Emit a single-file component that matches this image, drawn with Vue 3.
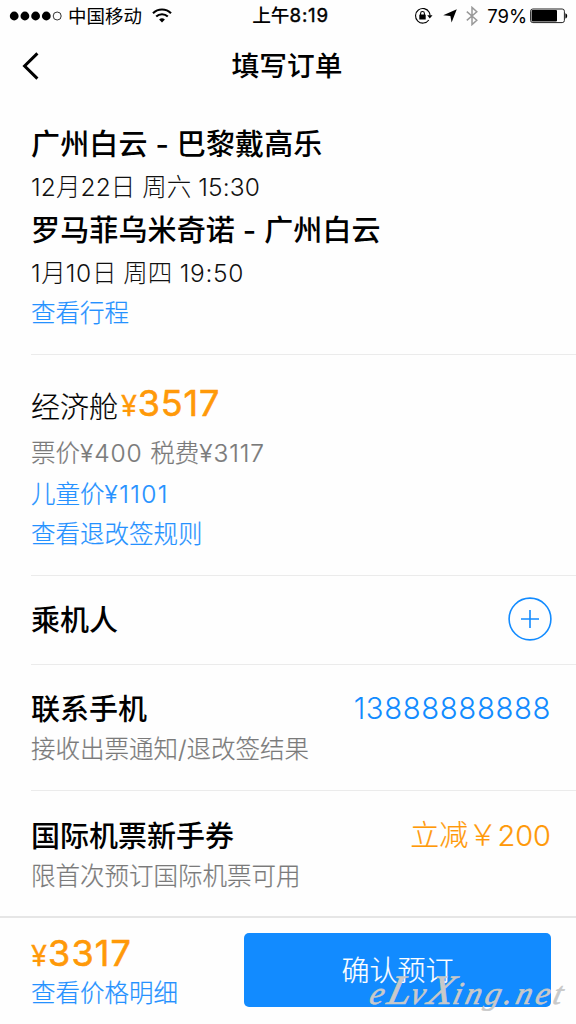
<script setup>
const flights = [
  { route: '广州白云 - 巴黎戴高乐', time: ['12', '月', '22', '日 周六', ' 15:30'], key: 'outbound' },
  { route: '罗马菲乌米奇诺 - 广州白云', time: ['1', '月', '10', '日 周四', ' 19:50'], key: 'inbound' },
]
</script>

<template>
  <div class="screen">
    <header class="status">
      <div class="carrier">
        <svg class="dots" width="54" height="12" viewBox="0 0 54 12">
          <circle cx="5.2" cy="6" r="4.4" /><circle cx="15.9" cy="6" r="4.4" />
          <circle cx="26.6" cy="6" r="4.4" /><circle cx="37.3" cy="6" r="4.4" />
          <circle cx="48.2" cy="6" r="4" fill="none" stroke="#000" stroke-width=".8" />
        </svg>
        <span class="carrier-name">中国移动</span>
        <svg class="wifi" width="20" height="16" viewBox="0 0 20 16" fill="none" stroke="#000">
          <path d="M1 5.2a12.7 12.7 0 0 1 18 0" stroke-width="2.1" />
          <path d="M4.2 8.6a8.2 8.2 0 0 1 11.6 0" stroke-width="2.1" />
          <path d="M10 14.6 7.1 11.6a4.2 4.2 0 0 1 5.8 0z" fill="#000" stroke="none" />
        </svg>
      </div>
      <div class="clock">上午<span>8:19</span></div>
      <div class="indicators">
        <svg class="lock" width="19" height="18" viewBox="0 0 19 18" fill="none" stroke="#000">
          <path d="M15.2 5.2A7.3 7.3 0 1 0 14.8 13M15.2 5.2a7.3 7.3 0 0 1 .8 3.3" stroke-width="1.1" />
          <path d="M13.2 8.2h5.3l-2.7 3.2z" fill="#000" stroke="none" />
          <rect x="5.3" y="7.6" width="6.4" height="5" rx=".4" fill="#000" stroke="none" />
          <path d="M6.6 8V6.4a1.9 1.9 0 0 1 3.8 0V8" stroke-width="1.1" />
        </svg>
        <svg class="arrow" width="14" height="14" viewBox="0 0 14 14"><path d="M13.8.3 8.6 13.6 7.4 7 .2 6.2z" /></svg>
        <svg class="bt" width="12" height="20" viewBox="0 0 12 20" fill="none" stroke="#999" stroke-width="1.5">
          <path d="m.8 5.6 10 8.6L6 18.6V1.4l4.8 4.4-10 8.6" />
        </svg>
        <span class="percent">79%</span>
        <svg class="battery" width="38" height="16" viewBox="0 0 38 16">
          <rect x=".6" y="1" width="33.8" height="13.6" rx="2.2" fill="none" stroke="#222" stroke-width="1" />
          <rect x="1.6" y="2" width="25.4" height="11.6" rx="1" />
          <path d="M35.4 5.2c2.4.6 2.4 4.8 0 5.2z" />
        </svg>
      </div>
    </header>

    <nav class="nav">
      <svg class="back" width="18" height="28" viewBox="0 0 18 28" fill="none" stroke="#000" stroke-width="3">
        <path d="M15.4 1.4 2.6 14l12.8 12.6" />
      </svg>
      <h1>填写订单</h1>
    </nav>

    <main>
      <section class="trip">
        <template v-for="f in flights" :key="f.key">
          <div class="line title"><span>{{ f.route }}</span></div>
          <div class="line sub dark" :class="f.key"><span v-for="(part, i) in f.time" :key="i" :class="{ num: i % 2 === 0 }">{{ part }}</span></div>
        </template>
        <div class="line sub link last">查看行程</div>
      </section>

      <section class="fare">
        <div class="fare-head"><span class="cabin">经济舱</span><span class="price"><i>¥</i>3517</span></div>
        <div class="line sub gray detail">票价<span>¥400 </span>税费<span>¥3117</span></div>
        <div class="line sub link child">儿童价<span>¥1101</span></div>
        <div class="line sub link">查看退改签规则</div>
      </section>

      <section class="row passenger">
        <div class="line title">乘机人</div>
        <svg class="add" width="44" height="44" viewBox="0 0 44 44" fill="none" stroke="#128bff">
          <circle cx="22" cy="22" r="20.9" stroke-width="1.6" />
          <path d="M13 22h18M22 13v18" stroke-width="1.6" />
        </svg>
      </section>

      <section class="row phone">
        <div>
          <div class="line title">联系手机</div>
          <div class="line sub gray">接收出票通知/退改签结果</div>
        </div>
        <div class="number">13888888888</div>
      </section>

      <section class="row coupon">
        <div>
          <div class="line title">国际机票新手券</div>
          <div class="line sub gray">限首次预订国际机票可用</div>
        </div>
        <div class="discount">立减￥<span>200</span></div>
      </section>
    </main>

    <footer>
      <div class="total">
        <div class="price"><i>¥</i>3317</div>
        <div class="line sub link">查看价格明细</div>
      </div>
      <div class="submit">确认预订</div>
      <div class="watermark">e<b>L</b>v<b class="x">X</b>ing.net</div>
    </footer>
  </div>
</template>

<style>
body { margin: 0; background: #fefefe; }
</style>

<style scoped>
.screen {
  position: relative;
  width: 576px;
  height: 1024px;
  overflow: hidden;
  display: flex;
  flex-direction: column;
  background: #fefefe;
  color: #000;
  font-family: Inter, "Noto Sans CJK SC", sans-serif;
  white-space: nowrap;
}
svg { display: block; flex: none; }
.status {
  height: 32px;
  display: grid;
  grid-template-columns: 1fr auto 1fr;
  align-items: center;
  box-sizing: border-box;
  padding: 0 8px 0 9px;
}
.carrier, .indicators { display: flex; align-items: center; }
.carrier-name { font-size: 18.5px; line-height: 32px; margin-left: 5px; }
.wifi { margin-left: 10px; }
.clock { font-size: 18.7px; font-weight: 500; line-height: 32px; padding: 0 0 0 4px; }
.clock span { font-weight: 400; letter-spacing: .8px; -webkit-text-stroke: .4px #000; }
.indicators { justify-content: flex-end; }
.lock { margin-right: 1px; }
.arrow { margin-left: 9px; }
.bt { margin-left: 9px; }
.percent { font-size: 18.5px; line-height: 32px; margin: 0 3px 0 9px; letter-spacing: -.1px; }
.nav { height: 66px; display: grid; grid-template-columns: 1fr auto 1fr; align-items: center; }
.back { margin-left: 22px; }
.nav h1 { margin: 0; padding: 1px 2px 0 0; font-size: 27.7px; font-weight: 500; line-height: 66px; }
section { box-sizing: border-box; margin-left: 31px; border-bottom: 1px solid #ebebeb; }
.line { height: 43px; line-height: 43px; }
.title { font-size: 29px; font-weight: 500; }
.title span { letter-spacing: .13px; }
.sub { font-size: 24.5px; font-weight: 300; -webkit-text-stroke: .2px currentColor; }
.sub span { white-space: pre; }
.dark { color: #111; -webkit-text-stroke-width: 0; }
.outbound .num { letter-spacing: .15px; }
.inbound .num { letter-spacing: .65px; }
.gray { color: #7a7a7a; }
.link { color: #2491ff; height: 40px; line-height: 40px; }
.trip { height: 257px; padding-top: 25px; }
.trip .last { height: 37px; line-height: 37px; }
.fare { height: 221px; padding-top: 24px; }
.fare-head { height: 54px; line-height: 52px; display: flex; align-items: baseline; }
.cabin { font-size: 29px; font-weight: 300; -webkit-text-stroke: .2px #000; }
.price { color: #ff9908; font-size: 36px; font-weight: 400; letter-spacing: .8px; -webkit-text-stroke: .6px #ff9908; }
.price i { font-style: normal; font-size: 29px; -webkit-text-stroke-width: .3px; }
.fare .price { margin-left: 3px; position: relative; top: -2px; }
.fare .gray { height: 41px; line-height: 41px; }
.detail span { letter-spacing: .9px; }
.child span { letter-spacing: 1.4px; }
.row { display: flex; justify-content: space-between; padding-right: 25px; }
.passenger { height: 89px; align-items: center; }
.passenger .add { margin: -2px -1px 0 0; }
.phone { height: 126px; padding-top: 23px; }
.coupon { height: 126px; padding-top: 24px; border-bottom: 0; }
.row .gray { height: 37px; line-height: 37px; }
.number { color: #128bff; font-size: 29.3px; font-weight: 300; line-height: 43px; letter-spacing: .62px; margin-top: -1px; }
.discount { color: #ff9908; font-size: 29px; font-weight: 300; line-height: 43px; margin-top: -1px; -webkit-text-stroke: .2px #ff9908; }
footer {
  position: relative;
  flex: 1;
  box-sizing: border-box;
  margin-top: -1px;
  border-top: 2px solid #e6e6e6;
  display: flex;
  justify-content: space-between;
  align-items: flex-start;
  padding: 15px 25px 0 31px;
}
.total .price { height: 39px; line-height: 40px; letter-spacing: 1.1px; }
.total .link { padding-top: 1px; }
.submit {
  width: 307px;
  height: 74px;
  border-radius: 5px;
  background: #128bff;
  color: #fff;
  font-size: 28px;
  font-weight: 300;
  line-height: 76px;
  text-align: center;
  -webkit-text-stroke: .2px #fff;
}
.watermark {
  position: absolute;
  left: 371px;
  top: 50px;
  font: italic 32px/44px "Liberation Serif", serif;
  letter-spacing: 3.5px;
  color: #c9c9c9;
  -webkit-text-stroke: .6px #c9c9c9;
  transform: skewX(-14deg);
}
.watermark b { font-weight: 400; font-size: 42px; letter-spacing: 0; }
.watermark .x { margin-left: -1px; }
</style>
